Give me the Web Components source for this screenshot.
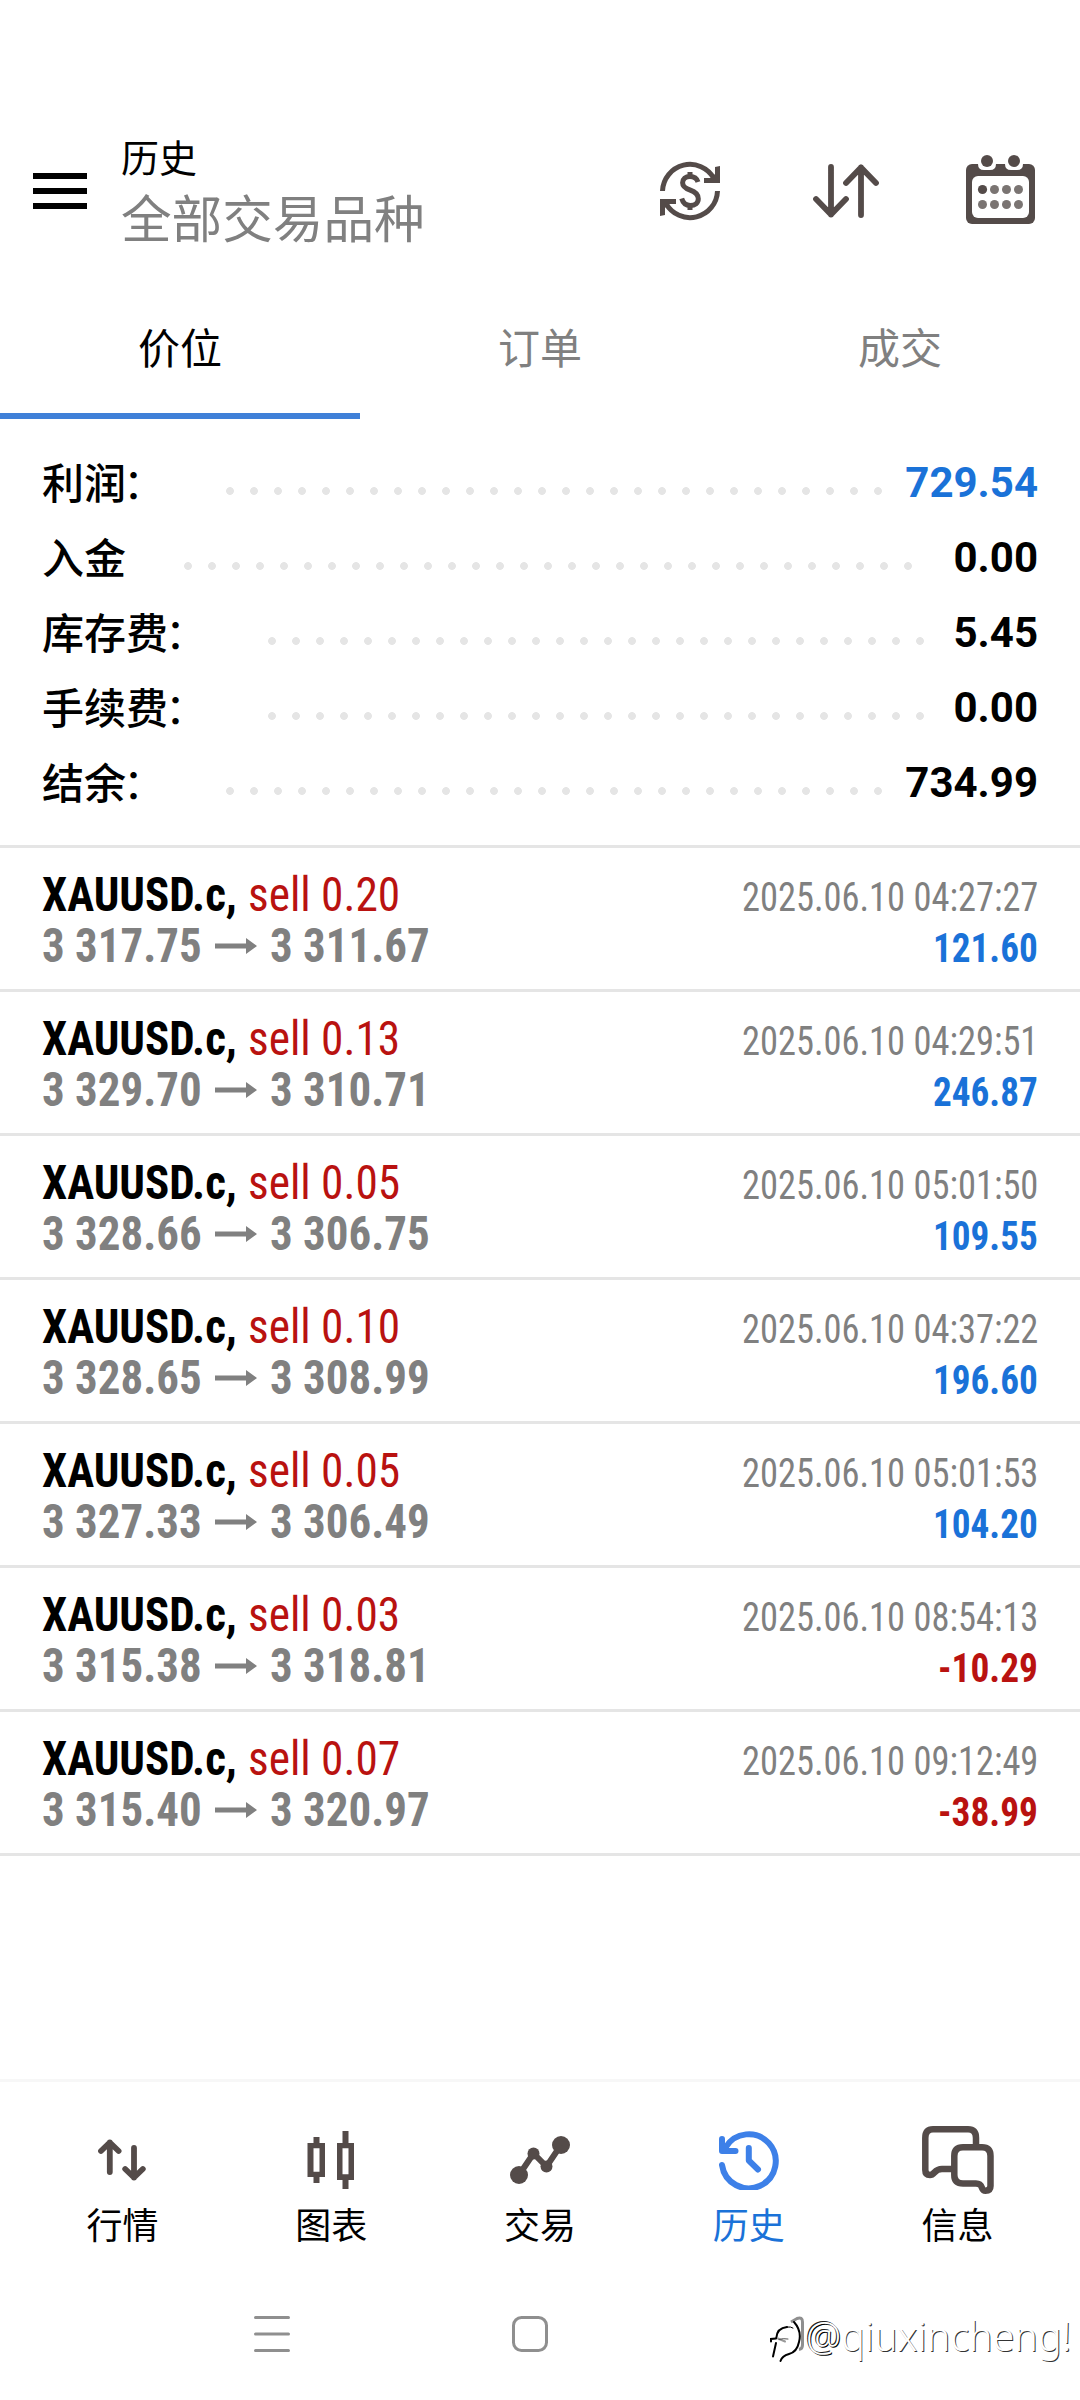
<!DOCTYPE html>
<html lang="zh-CN">
<head>
<meta charset="utf-8">
<title>历史</title>
<style>
html,body{margin:0;padding:0;background:#fff}
body{width:1080px;height:2400px;overflow:hidden;font-family:Roboto,"Noto Sans CJK SC",sans-serif}
</style>
</head>
<body>
<history-app></history-app>
<script>
const define = (name, html, setup) => {
  const t = document.createElement('template');
  t.innerHTML = html;
  customElements.define(name, class extends HTMLElement {
    connectedCallback() {
      if (this.shadowRoot) return;
      this.attachShadow({mode: 'open'}).appendChild(t.content.cloneNode(true));
      if (setup) setup(this, this.shadowRoot);
    }
  });
};

const ICONS = {
  menu: [54, 36, '<path fill="#000" d="M0 0h54v6H0zM0 15h54v6H0zM0 30h54v6H0z"/>'],
  currency: [60, 60, '<g fill="none" stroke="currentColor" stroke-width="5"><path d="M2.5 30A27.5 27.5 0 0 1 54 17.5"/><path d="M57.500 30A27.500 27.500 0 0 1 6 42.500"/><path d="M38 21C36.800 17.300 34 15.500 30 15.500C25.500 15.500 22.600 18 22.600 21.800C22.600 26.300 26 27.700 30 29C35 30.700 38.300 32.800 38.300 37.800C38.300 42 35 44.500 30.300 44.500C26 44.500 23 42 21.700 37.500"/></g><path fill="currentColor" d="M60 5v17H44v-5h7l4-4V6zM0 55V38h16v5H9l-4 4v7zM27.500 11h5v5h-5zM27.500 44h5v5h-5z"/>'],
  sort: [66, 54, '<path fill="none" stroke="currentColor" stroke-width="5.800" stroke-linecap="round" stroke-linejoin="round" d="M18 3V50.500M3 35L18 50.500L33 35M48 51V3.500M33 19L48 3.500L63 19"/>'],
  calendar: [69, 69, '<rect y="9" width="69" height="60" rx="6" fill="currentColor"/><rect x="6" y="21" width="57" height="42" rx="6" fill="#fff"/><path fill="#fff" d="M12 0h18v9q0 6-6 6h-6q-6 0-6-6zM39 0h18v9q0 6-6 6h-6q-6 0-6-6z"/><circle cx="21" cy="6" r="6" fill="currentColor"/><circle cx="48" cy="6" r="6" fill="currentColor"/><circle cx="16.500" cy="34.500" r="4.600" fill="currentColor"/><g fill="#7a7472"><circle cx="28.500" cy="34.500" r="4.500"/><circle cx="40.500" cy="34.500" r="4.500"/><circle cx="52.500" cy="34.500" r="4.500"/><circle cx="16.500" cy="49.500" r="4.500"/><circle cx="28.500" cy="49.500" r="4.500"/><circle cx="40.500" cy="49.500" r="4.500"/><circle cx="52.500" cy="49.500" r="4.500"/></g>'],
  arrow: [42, 16, '<path fill="currentColor" d="M0 5.500h31V0l11 8-11 8v-5.500H0z"/>'],
  quotes: [48, 42, '<path fill="none" stroke="currentColor" stroke-width="5.800" stroke-linecap="round" stroke-linejoin="round" d="M11.800 33V3.500M3 12L11.800 3.500L20.600 12M36 9V38.500M27.200 30L36 38.500L44.800 30"/>'],
  chart: [48, 58, '<path fill="currentColor" fill-rule="evenodd" d="M6.500 6h6v6H18v34h-5.500v6h-6v-6H.500V12h6zM6.500 17.300v23.500h6V17.300zM35.500 0h6v12H47v37h-5.500v9h-6v-9H30V12h5.500zM35.500 17.300v26h6v-26z"/>'],
  trade: [60, 48, '<g fill="currentColor"><circle cx="9" cy="39" r="9"/><circle cx="23.500" cy="17.500" r="6"/><circle cx="36.500" cy="30.500" r="6"/><circle cx="51" cy="9" r="9"/></g><path fill="none" stroke="currentColor" stroke-width="6" d="M9 39L23.500 17.500L36.500 30.500L51 9"/>'],
  history: [60, 60, '<g fill="none" stroke="currentColor" stroke-width="6" stroke-linecap="round" stroke-linejoin="round"><path d="M3 35A27 27 0 1 0 6.500 17.500"/><path d="M3 9V21H16.500"/><path d="M29.800 18V30.500L39 39.500"/></g><path fill="currentColor" d="M3 13l5 2 3 8H3z"/>'],
  messages: [72, 68, '<g fill="none" stroke="currentColor" stroke-width="6.500" stroke-linecap="butt" stroke-linejoin="round"><path d="M54 20V12Q54 3.300 46 3.300H11Q3.300 3.300 3.300 12V44Q3.300 49 8 49C13 49 12 43 20 43H31"/><path d="M41 21.300H60Q68.500 21.300 68.500 30V60Q68.500 64.700 63.500 64.700C58 64.700 62 57.500 54 57.500H41Q32.300 57.500 32.300 49V30Q32.300 21.300 41 21.300z"/></g>'],
  recents: [36, 36, '<path fill="none" stroke="#8f8f8f" stroke-width="3" stroke-linecap="round" d="M1.500 1.500h33M1.500 18h33M1.500 34.500h33"/>'],
  home: [36, 36, '<rect x="1.500" y="1.500" width="33" height="33" rx="8" fill="none" stroke="#8f8f8f" stroke-width="3"/>'],
  back: [16, 36, '<path fill="none" stroke="#8f8f8f" stroke-width="3" d="M2 6L8 2.500Q13.500 .500 13.500 6V29Q13.500 33 10 33.500"/>'],
  badge: [34, 50, '<g fill="none" stroke="#000" stroke-linecap="round"><path stroke-width="2" d="M7.300 24Q8 14 18 13"/><path stroke-width="1" d="M18 13Q22 12.500 24 14"/><path stroke-width="2" d="M25 8Q33 17 30 28Q28 38 20 40Q13 42 11.500 47"/><path stroke-width="2" d="M2 27.500V25L7 24.500M7 29L4 42.500"/><path stroke="#999" stroke-width="2" d="M9 24.500L16 27.500"/><path stroke="#555" stroke-width="1" d="M10 25.500Q14 24 19 25"/></g>']
};

define('ui-icon', '<style>:host{display:block;flex:none}svg{display:block}</style>', (el, root) => {
  const [w, h, body] = ICONS[el.getAttribute('name')];
  root.innerHTML += `<svg width="${w}" height="${h}" viewBox="0 0 ${w} ${h}">${body}</svg>`;
});

/* Text squeezed horizontally to the advance width given in the attribute. */
define('fit-text', '<style>:host{display:block;flex:none;white-space:nowrap}span{display:inline-block;transform-origin:0 50%}</style><span><slot></slot></span>', (el, root) => {
  const w = +el.getAttribute('width');
  el.style.width = w + 'px';
  const s = root.querySelector('span');
  s.style.transform = `scaleX(${w / s.offsetWidth})`;
});

define('app-header', `<style>
:host{display:flex;align-items:center;height:172px;padding:105px 45px 0 33px;color:#544b49}
.titles{flex:1;margin:-2px 0 0 34px;display:flex;flex-direction:column}
.t{font-size:38px;line-height:62px;color:#000}
.s{font-size:50.600px;line-height:62px;color:#808080}
.actions{display:flex;align-items:center}
.actions :nth-child(2){margin:0 87px 0 93px}
.actions :nth-child(3){margin-top:-3px}
</style><ui-icon name="menu"></ui-icon><div class="titles"><div class="t"><slot name="title"></slot></div><div class="s"><slot></slot></div></div>
<div class="actions"><ui-icon name="currency"></ui-icon><ui-icon name="sort"></ui-icon><ui-icon name="calendar"></ui-icon></div>`);

define('tab-item', `<style>:host{display:block;flex:1;text-align:center;font-size:42px;line-height:145px;height:142px;color:#808080}
:host([active]){color:#000;box-shadow:inset 0 -6px #4080d8}</style><slot></slot>`);
define('tab-bar', '<style>:host{display:flex}</style><slot></slot>');

define('summary-row', `<style>
:host{display:flex;align-items:center;height:75px;padding:0 42px}
.l{font:500 42px/75px "Noto Sans CJK SC",sans-serif;color:#000;margin-top:-5px}
.c{display:inline-block;width:42px;font-weight:400;text-indent:-3px}
.d{height:8px;margin:16px auto 0 50px;background:radial-gradient(circle at 12px 4px,#e5e5e5 3.500px,transparent 4.300px) 0 0/24px 8px}
.v{font:700 42px/75px Roboto,sans-serif;color:var(--value,#000)}
:host([gain]){--value:#1a72d8}
</style><span class="l"></span><span class="d"></span><span class="v"></span>`, (el, r) => {
  r.querySelector('.l').innerHTML = el.getAttribute('label').replace('：', '<span class="c">：</span>');
  r.querySelector('.d').style.width = el.getAttribute('dots') * 24 + 'px';
  r.querySelector('.v').textContent = el.getAttribute('value');
});
define('summary-list', '<style>:host{display:block;padding:26px 0 25px;border-bottom:3px solid #e5e5e5}</style><slot></slot>');

define('deal-row', `<style>
:host{display:block;height:120px;padding:21px 42px 0;border-bottom:3px solid #e5e5e5;font-family:"Roboto Condensed",Roboto,sans-serif;font-stretch:75%}
.row{display:flex;height:51px;align-items:baseline;line-height:51px;font-size:48px}
.sym{font-weight:700;color:#000}.vol{margin:0 auto 0 11px;color:#b91210}
.time{font-size:40px;color:#808080}
.p{font-weight:700;color:#808080}
ui-icon{color:#808080;margin:0 13px;align-self:center}
.profit{font-size:40px;font-weight:700;margin-left:auto;color:#1a72d8}
:host([loss]) .profit{color:#b91210}
</style><div class="row"><fit-text class="sym" width="195"></fit-text><fit-text class="vol" width="152"></fit-text><fit-text class="time" width="296"></fit-text></div>
<div class="row"><fit-text class="p a" width="160"></fit-text><ui-icon name="arrow"></ui-icon><fit-text class="p b" width="160"></fit-text><fit-text class="profit" width="105"></fit-text></div>`, (el, r) => {
  const set = (q, v) => {
    const n = r.querySelector(q);
    n.textContent = v;
    const s = n.shadowRoot.querySelector('span');
    s.style.transform = `scaleX(${n.getAttribute('width') / s.offsetWidth})`;
  };
  set('.sym', 'XAUUSD.c,');
  set('.vol', 'sell ' + el.getAttribute('volume'));
  set('.time', '2025.06.10 ' + el.getAttribute('time'));
  set('.a', el.getAttribute('open'));
  set('.b', el.getAttribute('close'));
  if (el.hasAttribute('loss')) r.querySelector('.profit').setAttribute('width', '100'), r.querySelector('.profit').style.width = '100px';
  set('.profit', el.getAttribute('profit'));
});

define('nav-item', `<style>:host{display:flex;flex:1;flex-direction:column;align-items:center;color:#544b49}
.i{height:72px;display:flex;align-items:center}
.l{font-size:36px;line-height:50px;margin-top:6px;color:#000}
:host([active]) .i{color:#3d80e8}:host([active]) .l{color:#1a72d8}
</style><div class="i"></div><div class="l"><slot></slot></div>`, (el, r) => {
  r.querySelector('.i').innerHTML = `<ui-icon name="${el.getAttribute('icon')}"></ui-icon>`;
});
define('bottom-nav', '<style>:host{display:flex;height:176px;padding:42px 18px 0;border-top:3px solid #f7f7f7}</style><slot></slot>');

define('system-bar', `<style>
:host{display:flex;align-items:center;height:68px;padding-left:254px;margin-bottom:32px}
.home{margin-left:222px}.back{margin-left:241px}
.mark{position:absolute;left:769px;top:2314px;display:flex}
.mark fit-text{margin:-2px 0 0 3px;font:300 41px/46px "Noto Sans",sans-serif;color:#fff;text-shadow:1px 1px 0 #333}
.at{text-shadow:1px 1px 0 #000,-1px -1px 0 #222}
</style><ui-icon name="recents"></ui-icon><ui-icon class="home" name="home"></ui-icon><ui-icon class="back" name="back"></ui-icon>
<div class="mark"><ui-icon name="badge"></ui-icon><fit-text width="265"><span class="at">@</span>qiuxincheng!</fit-text></div>`);

define('history-app', `<style>:host{display:flex;flex-direction:column;height:2400px;background:#fff}.grow{flex:1}</style>
<app-header><span slot="title">历史</span>全部交易品种</app-header>
<tab-bar><tab-item active>价位</tab-item><tab-item>订单</tab-item><tab-item>成交</tab-item></tab-bar>
<summary-list>
<summary-row label="利润：" dots="28" value="729.54" gain></summary-row>
<summary-row label="入金" dots="31" value="0.00"></summary-row>
<summary-row label="库存费：" dots="28" value="5.45"></summary-row>
<summary-row label="手续费：" dots="28" value="0.00"></summary-row>
<summary-row label="结余：" dots="28" value="734.99"></summary-row>
</summary-list>
<deal-row volume="0.20" time="04:27:27" open="3 317.75" close="3 311.67" profit="121.60"></deal-row>
<deal-row volume="0.13" time="04:29:51" open="3 329.70" close="3 310.71" profit="246.87"></deal-row>
<deal-row volume="0.05" time="05:01:50" open="3 328.66" close="3 306.75" profit="109.55"></deal-row>
<deal-row volume="0.10" time="04:37:22" open="3 328.65" close="3 308.99" profit="196.60"></deal-row>
<deal-row volume="0.05" time="05:01:53" open="3 327.33" close="3 306.49" profit="104.20"></deal-row>
<deal-row volume="0.03" time="08:54:13" open="3 315.38" close="3 318.81" profit="-10.29" loss></deal-row>
<deal-row volume="0.07" time="09:12:49" open="3 315.40" close="3 320.97" profit="-38.99" loss></deal-row>
<div class="grow"></div>
<bottom-nav><nav-item icon="quotes">行情</nav-item><nav-item icon="chart">图表</nav-item><nav-item icon="trade">交易</nav-item><nav-item icon="history" active>历史</nav-item><nav-item icon="messages">信息</nav-item></bottom-nav>
<system-bar></system-bar>`);
</script>
</body>
</html>
